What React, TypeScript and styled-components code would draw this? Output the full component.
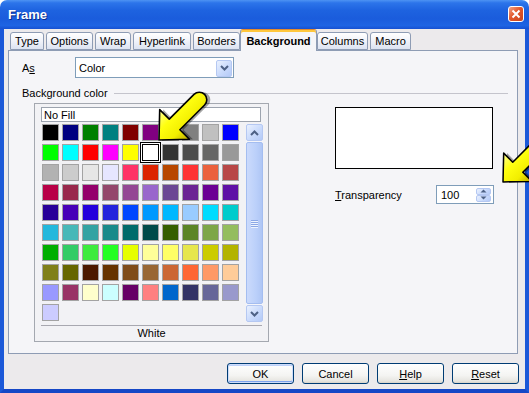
import React from 'react';
import styled, { createGlobalStyle } from 'styled-components';

const Global = createGlobalStyle`
  html, body { margin: 0; padding: 0; background: #ffffff; }
  body { font-family: "Liberation Sans", Arial, sans-serif; font-size: 11px; color: #000; }
  * { box-sizing: border-box; }
`;

const PALETTE = [
  '#000000','#000080','#008000','#008080','#800000','#800080','#808000','#808080','#C0C0C0','#0000FF',
  '#00FF00','#00FFFF','#FF0000','#FF00FF','#FFFF00','#FFFFFF','#333333','#4C4C4C','#666666','#999999',
  '#B2B2B2','#CCCCCC','#E6E6E6','#E6E6FF','#FF3366','#DC2300','#B84700','#FF3333','#EB613D','#B84747',
  '#B80047','#99284C','#94006B','#94476B','#944794','#9966CC','#6B4794','#6B2394','#6B0094','#5E11A6',
  '#280099','#4700B8','#2300DC','#2323DC','#0047FF','#0099FF','#00B8FF','#99CCFF','#00DCFF','#00CCCC',
  '#23B8DC','#47B8B8','#33A3A3','#198A8A','#006B6B','#004A4A','#355E00','#5C8526','#7DA647','#94BD5E',
  '#00AE00','#33CC66','#3DEB3D','#23FF23','#E6FF00','#FFFF99','#FFFF66','#E6E64C','#CCCC00','#B3B300',
  '#808019','#666600','#4C1900','#663300','#804C19','#996633','#CC6633','#FF6633','#FF9966','#FFCC99',
  '#9999FF','#993366','#FFFFCC','#CCFFFF','#660066','#FF8080','#0066CC','#333366','#666699','#9999CC',
  '#CCCCFF',
];

const TABS: { label: string; w: number; active?: boolean }[] = [
  { label: 'Type', w: 34 },
  { label: 'Options', w: 47 },
  { label: 'Wrap', w: 36 },
  { label: 'Hyperlink', w: 58 },
  { label: 'Borders', w: 47 },
  { label: 'Background', w: 77, active: true },
  { label: 'Columns', w: 51 },
  { label: 'Macro', w: 41 },
];

const Window = styled.div`
  position: relative;
  width: 529px;
  height: 393px;
  display: flex;
  flex-direction: column;
  overflow: hidden;
`;

const TitleBar = styled.div`
  height: 29px;
  flex: none;
  border-radius: 7px 7px 0 0;
  background: linear-gradient(180deg, #4D93F3 0%, #2C74EA 10%, #1E63E0 35%, #1A5CDC 65%, #1E64E3 88%, #1651D2 100%);
  display: flex;
  align-items: center;
  justify-content: space-between;
  padding: 0 5px 0 8px;
`;

const Title = styled.span`
  color: #ffffff;
  font: bold 13px "Liberation Sans", Arial, sans-serif;
  text-shadow: 1px 1px 0 #0B2C8A;
`;

const CloseButton = styled.div`
  width: 16px;
  height: 16px;
  margin-top: -2px;
  border: 1px solid #ffffff;
  border-radius: 3px;
  background: linear-gradient(135deg, #F2A488 0%, #E2572A 45%, #C8431C 100%);
  display: flex;
  align-items: center;
  justify-content: center;
`;

const Frame = styled.div`
  flex: 1;
  display: flex;
  flex-direction: column;
  background: #ECEAEC;
  border-left: 4px solid #1B58D8;
  border-right: 4px solid #1B58D8;
  border-bottom: 4px solid #1547C6;
  padding: 0 6px 0 4px;
`;

const TabStrip = styled.div`
  height: 22px;
  margin-bottom: -1px;
  padding-left: 2px;
  display: flex;
  align-items: flex-end;
  gap: 2px;
  position: relative;
  z-index: 2;
`;

const Tab = styled.div<{ $active?: boolean; $w: number }>`
  width: ${(p) => p.$w}px;
  height: ${(p) => (p.$active ? 22 : 18)}px;
  margin: ${(p) => (p.$active ? '0 -2px' : '0 0 1px')};
  border: 1px solid #8E9CB4;
  border-top-color: ${(p) => (p.$active ? '#E68B2C' : '#8E9CB4')};
  border-bottom: ${(p) => (p.$active ? 'none' : '1px solid #8E9CB4')};
  border-radius: 3px 3px 0 0;
  background: ${(p) =>
    p.$active ? '#F5F5F8' : 'linear-gradient(180deg, #FFFFFF 0%, #F2F4FA 45%, #DCE3F1 100%)'};
  box-shadow: ${(p) => (p.$active ? 'inset 0 2px 0 #FFC73C' : 'none')};
  display: flex;
  align-items: center;
  justify-content: center;
  padding-top: ${(p) => (p.$active ? 1 : 0)}px;
  font-weight: ${(p) => (p.$active ? 'bold' : 'normal')};
  white-space: nowrap;
`;

const Panel = styled.div`
  height: 304px;
  margin-right: 1px;
  border: 1px solid #8E9CB4;
  background: #F5F5F8;
  padding: 6px 9px 0 13px;
  position: relative;
  z-index: 1;
  display: flex;
  flex-direction: column;
`;

const FieldRow = styled.div`
  display: flex;
  align-items: center;
`;

const FieldLabel = styled.span<{ $w: number }>`
  width: ${(p) => p.$w}px;
  flex: none;
`;

const Combo = styled.div`
  width: 159px;
  height: 21px;
  border: 1px solid #7F9DB9;
  background: #ffffff;
  display: flex;
  align-items: center;
  justify-content: space-between;
  padding: 0 1px 0 3px;
`;

const XpButtonFace = styled.div`
  background: linear-gradient(135deg, #EAF1FE 0%, #C9DAFC 55%, #B4CAF7 100%);
  border: 1px solid #B5C8F2;
  border-radius: 2px;
  display: flex;
  align-items: center;
  justify-content: center;
`;

const DropButton = styled(XpButtonFace)`
  width: 16px;
  height: 17px;
  margin-top: 1px;
`;

const GroupHeading = styled.div`
  margin-top: 8px;
  height: 14px;
  display: flex;
  align-items: center;
  gap: 6px;
`;

const HeadingRule = styled.div`
  flex: 1;
  height: 1px;
  background: #C4C4CC;
`;

const ContentRow = styled.div`
  margin-top: 3px;
  display: flex;
  align-items: flex-start;
`;

const ColorBox = styled.div`
  margin-left: 12px;
  width: 235px;
  height: 239px;
  border: 1px solid #A4A8B0;
  background: #F2F2F5;
  padding: 3px 6px 0;
  display: flex;
  flex-direction: column;
`;

const NoFill = styled.div`
  width: 220px;
  height: 15px;
  border: 1px solid #9CA3AE;
  background: #ffffff;
  padding-left: 2px;
  display: flex;
  align-items: center;
`;

const GridRow = styled.div`
  margin-top: 2px;
  display: flex;
  align-items: flex-start;
`;

const SwatchGrid = styled.div`
  margin-left: 1px;
  display: grid;
  grid-template-columns: repeat(10, 17px);
  grid-auto-rows: 17px;
  gap: 3px;
  height: 197px;
`;

const Swatch = styled.div<{ $c: string; $sel?: boolean }>`
  width: 17px;
  height: 17px;
  background: ${(p) => p.$c};
  border: 1px solid ${(p) => (p.$sel ? '#000000' : '#A3A3A3')};
  box-shadow: ${(p) => (p.$sel ? '0 0 0 1px #ffffff, 0 0 0 2px #000000' : 'inset 0 0 0 0 transparent')};
`;

const ScrollBar = styled.div`
  margin-left: 7px;
  width: 17px;
  height: 198px;
  display: flex;
  flex-direction: column;
  background: #F4F5FA;
`;

const ScrollButton = styled(XpButtonFace)`
  width: 17px;
  height: 17px;
  flex: none;
`;

const Thumb = styled.div`
  flex: 1;
  margin: 1px 0;
  border: 1px solid #A4BDF0;
  border-radius: 2px;
  background: linear-gradient(90deg, #CBDAFC 0%, #BBD0FA 60%, #AFC6F5 100%);
  display: flex;
  flex-direction: column;
  align-items: center;
  justify-content: center;
  gap: 1px;
`;

const GripLine = styled.div`
  width: 7px;
  height: 1px;
  background: #8CA8E6;
  box-shadow: 0 1px 0 #EEF4FE;
`;

const Footer = styled.div`
  margin: 3px 0 0;
  border-top: 1px solid #A8A8B0;
  height: 15px;
  display: flex;
  align-items: center;
  justify-content: center;
`;

const RightCol = styled.div`
  margin-left: 66px;
  padding-top: 4px;
  display: flex;
  flex-direction: column;
`;

const Preview = styled.div`
  width: 158px;
  height: 62px;
  border: 1px solid #000000;
  background: #ffffff;
`;

const SpinRow = styled(FieldRow)`
  margin-top: 16px;
`;

const SpinField = styled.div`
  width: 58px;
  height: 19px;
  border: 1px solid #7F9DB9;
  background: #ffffff;
  display: flex;
  align-items: center;
  justify-content: space-between;
  padding: 0 2px 0 4px;
`;

const SpinButtons = styled.div`
  width: 15px;
  height: 14px;
  display: flex;
  flex-direction: column;
`;

const SpinHalf = styled(XpButtonFace)`
  flex: 1;
`;

const ButtonRow = styled.div`
  margin-top: 9px;
  display: flex;
  justify-content: flex-end;
  gap: 8px;
`;

const PushButton = styled.div<{ $default?: boolean }>`
  width: 67px;
  height: 21px;
  border: 1px solid #003C74;
  border-radius: 3px;
  background: linear-gradient(180deg, #FFFFFF 0%, #F4F4F2 60%, #E6E5E0 90%, #D6D2C8 100%);
  box-shadow: ${(p) =>
    p.$default ? 'inset 0 0 0 1px #CEDCFA, inset 0 -1px 0 1px #7DA2EE, inset 0 1px 0 1px #BCD1FA' : 'none'};
  display: flex;
  align-items: center;
  justify-content: center;
`;

const Overlay = styled.svg`
  position: absolute;
  left: 0;
  top: 0;
  pointer-events: none;
  z-index: 10;
`;

const Chevron = ({ up }: { up?: boolean }) => (
  <svg width="9" height="6" viewBox="0 0 9 6">
    <path
      d={up ? 'M1 5 L4.5 1.5 L8 5' : 'M1 1 L4.5 4.5 L8 1'}
      fill="none"
      stroke="#4D6185"
      strokeWidth="2"
    />
  </svg>
);

const Tri = ({ up }: { up?: boolean }) => (
  <svg width="7" height="4" viewBox="0 0 7 4">
    <path d={up ? 'M0.5 3.5 L3.5 0.5 L6.5 3.5 Z' : 'M0.5 0.5 L3.5 3.5 L6.5 0.5 Z'} fill="#4D6185" />
  </svg>
);

const arrowPath = (L: number) =>
  `M0,0 L22,-21 L22,-7.5 L${L},-7.5 A7.5,7.5 0 0 1 ${L},7.5 L22,7.5 L22,21 Z`;

const Arrow = ({ x, y, s, L, id }: { x: number; y: number; s: number; L: number; id: string }) => (
  <g transform={`translate(${x},${y}) scale(${s}) rotate(-45)`}>
    <path d={arrowPath(L)} transform="translate(2.5,2.5)" fill="rgba(0,0,0,0.35)" />
    <path d={arrowPath(L)} fill={`url(#${id})`} stroke="#000" strokeWidth="1.6" strokeLinejoin="round" />
  </g>
);

export default function App() {
  return (
    <>
      <Global />
      <Window>
        <TitleBar>
          <Title>Frame</Title>
          <CloseButton>
            <svg width="10" height="10" viewBox="0 0 10 10">
              <path d="M1.5 1.5 L8.5 8.5 M8.5 1.5 L1.5 8.5" stroke="#fff" strokeWidth="2" />
            </svg>
          </CloseButton>
        </TitleBar>
        <Frame>
          <TabStrip>
            {TABS.map((t) => (
              <Tab key={t.label} $w={t.w} $active={t.active}>
                {t.label}
              </Tab>
            ))}
          </TabStrip>
          <Panel>
            <FieldRow>
              <FieldLabel $w={53}>
                A<u>s</u>
              </FieldLabel>
              <Combo>
                <span>Color</span>
                <DropButton>
                  <Chevron />
                </DropButton>
              </Combo>
            </FieldRow>
            <GroupHeading>
              <span>Background color</span>
              <HeadingRule />
            </GroupHeading>
            <ContentRow>
              <ColorBox>
                <NoFill>No Fill</NoFill>
                <GridRow>
                  <SwatchGrid>
                    {PALETTE.map((c, i) => (
                      <Swatch key={i} $c={c} $sel={i === 15} />
                    ))}
                  </SwatchGrid>
                  <ScrollBar>
                    <ScrollButton>
                      <Chevron up />
                    </ScrollButton>
                    <Thumb>
                      <GripLine />
                      <GripLine />
                      <GripLine />
                      <GripLine />
                    </Thumb>
                    <ScrollButton>
                      <Chevron />
                    </ScrollButton>
                  </ScrollBar>
                </GridRow>
                <Footer>White</Footer>
              </ColorBox>
              <RightCol>
                <Preview />
                <SpinRow>
                  <FieldLabel $w={101}>
                    <u>T</u>ransparency
                  </FieldLabel>
                  <SpinField>
                    <span>100</span>
                    <SpinButtons>
                      <SpinHalf>
                        <Tri up />
                      </SpinHalf>
                      <SpinHalf>
                        <Tri />
                      </SpinHalf>
                    </SpinButtons>
                  </SpinField>
                </SpinRow>
              </RightCol>
            </ContentRow>
          </Panel>
          <ButtonRow>
            <PushButton $default>OK</PushButton>
            <PushButton>Cancel</PushButton>
            <PushButton>
              <u>H</u>elp
            </PushButton>
            <PushButton>
              <u>R</u>eset
            </PushButton>
          </ButtonRow>
        </Frame>
        <Overlay width="529" height="393" viewBox="0 0 529 393">
          <defs>
            <linearGradient id="ya" gradientUnits="userSpaceOnUse" x1="0" y1="-21" x2="0" y2="21" gradientTransform="rotate(0)">
              <stop offset="0" stopColor="#FFFF9A" />
              <stop offset="0.35" stopColor="#FFFF10" />
              <stop offset="0.7" stopColor="#F2EE00" />
              <stop offset="1" stopColor="#B8A600" />
            </linearGradient>
          </defs>
          <Arrow x={159} y={140} s={1} L={57} id="ya" />
          <Arrow x={503} y={182} s={0.95} L={70} id="ya" />
        </Overlay>
      </Window>
    </>
  );
}
